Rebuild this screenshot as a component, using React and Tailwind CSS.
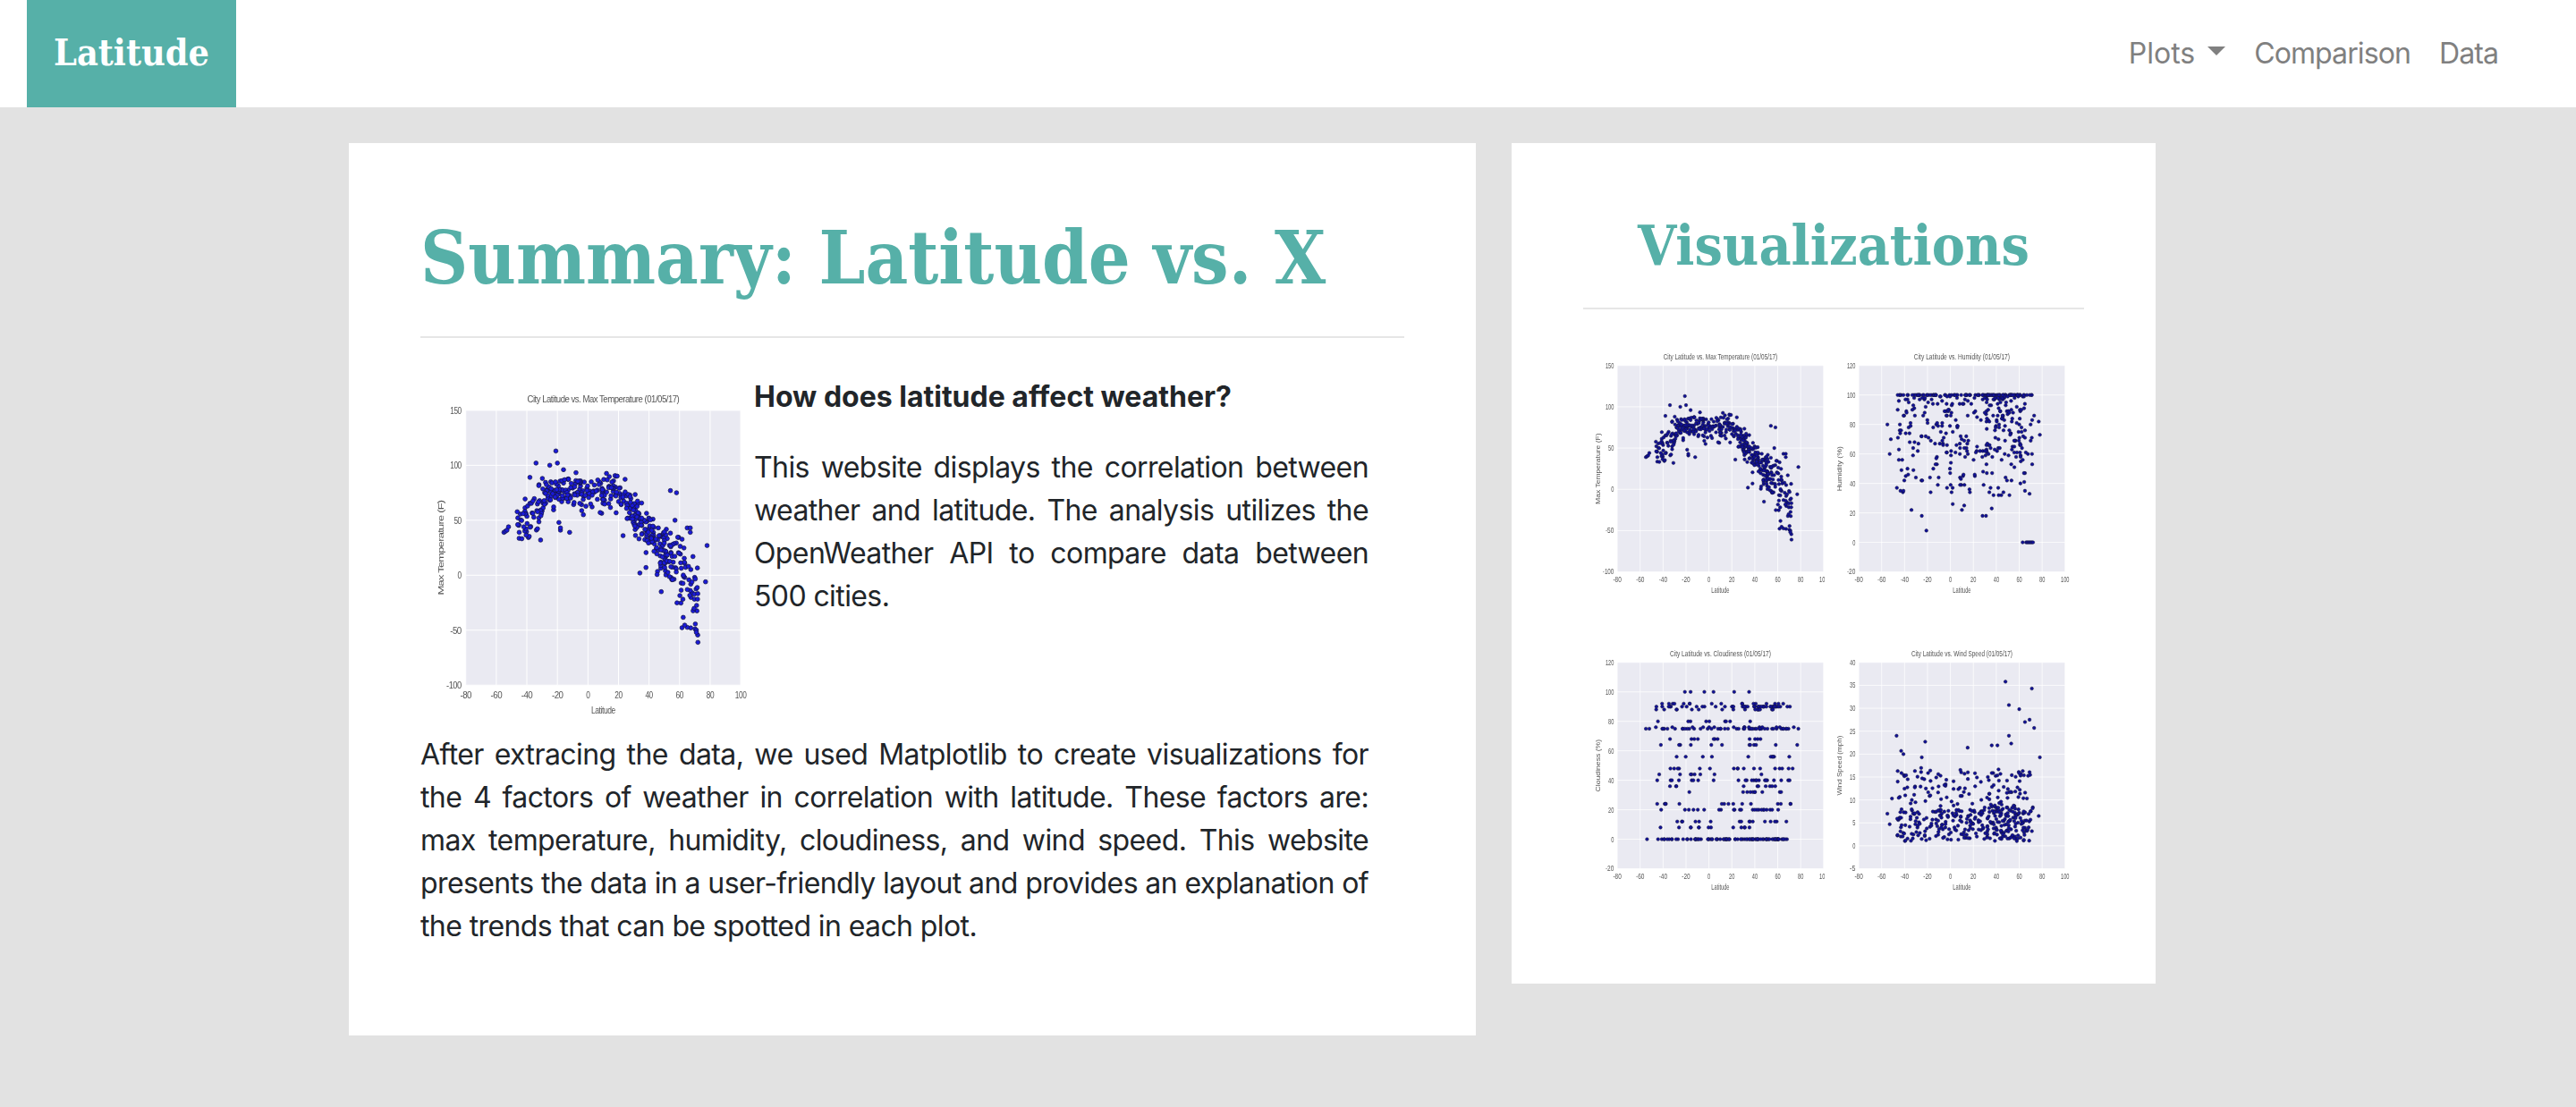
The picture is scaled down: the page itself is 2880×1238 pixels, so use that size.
import React from 'react'

// seeded random so the charts draw the same every time
function makeRandom(seed) {
  let s = seed
  return () => {
    s = (s * 1664525 + 1013904223) % 4294967296
    return s / 4294967296
  }
}

function gauss(rnd) {
  return (rnd() + rnd() + rnd() + rnd() - 2) / 0.58
}

function makeLats(count, seed) {
  const rnd = makeRandom(seed)
  const lats = []
  for (let i = 0; i < count; i++) {
    const r = rnd()
    if (r < 0.07) lats.push(-47 + rnd() * 12)
    else if (r < 0.34) lats.push(-35 + rnd() * 35)
    else if (r < 0.52) lats.push(rnd() * 28)
    else if (r < 0.95) lats.push(28 + rnd() * 37)
    else lats.push(65 + rnd() * 7)
  }
  return lats
}

function tempData() {
  const rnd = makeRandom(11)
  const pts = makeLats(470, 5).map((lat) => {
    let t
    if (lat < -30) t = 62 + (lat + 30) * 0.9 + gauss(rnd) * 9
    else if (lat < 18) t = 77 + gauss(rnd) * 7 - (rnd() < 0.12 ? 14 : 0)
    else if (lat < 45) t = 78 - (lat - 18) * 1.9 + gauss(rnd) * 9
    else if (lat < 58) t = 27 - (lat - 45) * 1.2 + gauss(rnd) * 13
    else t = 12 - (lat - 58) * 2.6 + gauss(rnd) * 20
    return [lat, t]
  })
  const extra = [[-21, 113], [-34, 102], [-25, 100], [-20, 102], [-16, 96], [-38, 89], [54, 77], [58, 75], [-55, 39], [-54, 40], [-53, 41], [-52, 44], [-46, 46], [-45, 39], [-42, 44], [-31, 32], [-12, 39], [-19, 48], [-18, 41], [-18, 43], [78, 27], [77, -6], [72, -61], [71, -50], [71, -52], [34, 2], [38, 7], [48, -15], [57, 50], [65, 43], [67, 43], [67, 39], [-3, 55], [8, 57], [23, 36]]
  return pts.concat(extra)
}

function humidityData() {
  const rnd = makeRandom(23)
  const pts = makeLats(430, 9).map((lat) => {
    const r = rnd()
    if (r < 0.25) return [lat, 100]
    if (r < 0.82) return [lat, Math.round(100 - rnd() * 42)]
    return [lat, Math.round(62 - rnd() * 30)]
  })
  const extra = [[-55, 80], [-53, 60], [-52, 70], [-46, 90], [-46, 100], [-45, 56], [-41, 35], [-39, 45], [-34, 22], [-25, 18], [-21, 8], [2, 26], [10, 22], [12, 25], [28, 18], [31, 18], [36, 23], [65, 35], [69, 33], [63, 0], [66, 0], [67, 0], [68, 0], [69, 0], [70, 0], [71, 0], [72, 0], [78, 73], [77, 82], [73, 86]]
  return pts.concat(extra)
}

function cloudData() {
  const rnd = makeRandom(37)
  const levels = [0, 0, 0, 0, 0, 0, 0, 0, 8, 12, 20, 20, 24, 32, 36, 40, 40, 44, 48, 56, 64, 68, 75, 75, 75, 75, 76, 80, 88, 90, 90, 90, 90, 92]
  const pts = makeLats(400, 14).map((lat) => [lat, levels[Math.floor(rnd() * levels.length)]])
  const extra = [[-21, 100], [-16, 100], [-4, 100], [4, 100], [22, 100], [35, 100], [-55, 75], [-52, 75], [-46, 88], [-38, 24], [78, 75], [77, 64], [-54, 0], [73, 48], [74, 76]]
  return pts.concat(extra)
}

function windData() {
  const rnd = makeRandom(51)
  const pts = makeLats(430, 21).map((lat) => {
    const r = rnd()
    const w = r < 0.62 ? 1 + rnd() * 7 : 5 + rnd() * 12
    return [lat, w]
  })
  const extra = [[48, 35.8], [71, 34.3], [51, 30.7], [60, 29.8], [69, 27.5], [65, 27], [73, 25.7], [-47, 24], [-22, 22.7], [15, 21.4], [36, 21.9], [41, 21.9], [-43, 20.7], [-41, 20], [53, 22.3], [51, 24], [78, 19.3], [77, 6.5], [-55, 7], [-53, 4.7], [-51, 10.3], [-46, 16.3], [-46, 14], [-25, 19.3]]
  return pts.concat(extra)
}

const plots = {
  temp: { title: 'City Latitude vs. Max Temperature (01/05/17)', ylabel: 'Max Temperature (F)', ymin: -100, ymax: 150, ticks: [-100, -50, 0, 50, 100, 150], data: tempData() },
  humidity: { title: 'City Latitude vs. Humidity (01/05/17)', ylabel: 'Humidity (%)', ymin: -20, ymax: 120, ticks: [-20, 0, 20, 40, 60, 80, 100, 120], data: humidityData() },
  cloud: { title: 'City Latitude vs. Cloudiness (01/05/17)', ylabel: 'Cloudiness (%)', ymin: -20, ymax: 120, ticks: [-20, 0, 20, 40, 60, 80, 100, 120], data: cloudData() },
  wind: { title: 'City Latitude vs. Wind Speed (01/05/17)', ylabel: 'Wind Speed (mph)', ymin: -5, ymax: 40, ticks: [-5, 0, 5, 10, 15, 20, 25, 30, 35, 40], data: windData() },
}

const xTicks = [-80, -60, -40, -20, 0, 20, 40, 60, 80, 100]

// plot area inside the 375x374 picture
const left = 51
const top = 22
const size = 309

function Scatter({ plot, className, dot = '#1a1ad8' }) {
  const sx = (v) => left + ((v + 80) / 180) * size
  const sy = (v) => top + size - ((v - plot.ymin) / (plot.ymax - plot.ymin)) * size
  const titleWidth = plot.title.length * 3.88
  const ylabelWidth = plot.ylabel.length * 5.6
  return (
    <svg viewBox="0 0 375 374" className={className} fontFamily="'Liberation Sans', sans-serif" fill="#555555">
      <rect x={left} y={top} width={size} height={size} fill="#eaeaf2" />
      {xTicks.map((t) => (
        <line key={t} x1={sx(t)} x2={sx(t)} y1={top} y2={top + size} stroke="#ffffff" strokeWidth="1" />
      ))}
      {plot.ticks.map((t) => (
        <line key={t} x1={left} x2={left + size} y1={sy(t)} y2={sy(t)} stroke="#ffffff" strokeWidth="1" />
      ))}
      {plot.data.map((p, i) => (
        <circle key={i} cx={sx(p[0])} cy={sy(p[1])} r="2.4" fill={dot} stroke="#14143c" strokeWidth="0.7" />
      ))}
      <text x={left + size / 2} y="13" fontSize="11.5" textAnchor="middle" textLength={titleWidth} lengthAdjust="spacingAndGlyphs">{plot.title}</text>
      {xTicks.map((t) => (
        <text key={t} x={sx(t)} y={top + size + 15} fontSize="11" textAnchor="middle" textLength={String(t).length * 4.2} lengthAdjust="spacingAndGlyphs">{t}</text>
      ))}
      {plot.ticks.map((t) => (
        <text key={t} x={left - 5} y={sy(t) + 4} fontSize="11" textAnchor="end" textLength={String(t).length * 4.2} lengthAdjust="spacingAndGlyphs">{t}</text>
      ))}
      <text x={left + size / 2} y="363" fontSize="11.5" textAnchor="middle" textLength="27" lengthAdjust="spacingAndGlyphs">Latitude</text>
      <text transform={`translate(26 ${top + size / 2}) rotate(-90)`} fontSize="10" textAnchor="middle" textLength={ylabelWidth} lengthAdjust="spacingAndGlyphs">{plot.ylabel}</text>
    </svg>
  )
}

function Navbar() {
  return (
    <nav className="flex h-[120px] items-stretch justify-between bg-white pl-[30px] pr-[71px]">
      <a className="flex w-[234px] items-center justify-center bg-[#56b0a8] text-[41px] font-bold text-white [font-family:'DejaVu_Serif_Condensed','DejaVu_Serif',serif]">Latitude</a>
      <div className="flex items-center text-[32px] tracking-[-0.9px] text-[#808080]">
        <a className="flex items-center px-4 tracking-normal">
          Plots
          <span className="ml-[14px] mt-[-6px] h-0 w-0 border-x-[10px] border-t-[10px] border-x-transparent border-t-[#808080]"></span>
        </a>
        <a className="px-4">Comparison</a>
        <a className="px-4">Data</a>
      </div>
    </nav>
  )
}

function Summary() {
  return (
    <section className="w-[1260px] bg-white px-20 pb-[98px] pt-[80px]">
      <h1 className="text-[82px] font-bold leading-[96px] text-[#56b0a8] [font-family:'DejaVu_Serif_Condensed','DejaVu_Serif',serif]">Summary: Latitude vs. X</h1>
      <hr className="mb-[42px] mt-[40px] border-t-2 border-[#e6e6e6]" />
      <div className="pr-10 text-justify text-[32px] leading-[48px] tracking-[-0.6px] text-[#212529]">
        <Scatter plot={plots.temp} className="float-left mt-[16px] h-[374px] w-[373px] blur-[0.4px]" />
        <p className="mb-[31px] font-bold tracking-normal">How does latitude affect weather?</p>
        <p>This website displays the correlation between weather and latitude. The analysis utilizes the OpenWeather API to compare data between 500 cities.</p>
        <p className="clear-both pt-[10px]">After extracing the data, we used Matplotlib to create visualizations for the 4 factors of weather in correlation with latitude. These factors are: max temperature, humidity, cloudiness, and wind speed. This website presents the data in a user-friendly layout and provides an explanation of the trends that can be spotted in each plot.</p>
      </div>
    </section>
  )
}

function Visualizations() {
  return (
    <section className="w-[720px] bg-white px-20 pb-[96px] pt-[80px]">
      <h2 className="text-center text-[62px] font-bold leading-[70px] text-[#56b0a8] [font-family:'DejaVu_Serif_Condensed','DejaVu_Serif',serif]">Visualizations</h2>
      <hr className="mb-[46px] mt-[34px] border-t-2 border-[#e6e6e6]" />
      <div className="grid grid-cols-[270px_290px] gap-y-[52px]">
        <div className="overflow-hidden"><Scatter plot={plots.temp} dot="#10109a" className="h-[280px] w-[280px] max-w-none blur-[0.7px]" /></div>
        <div><Scatter plot={plots.humidity} dot="#10109a" className="h-[280px] w-[280px] blur-[0.7px]" /></div>
        <div className="overflow-hidden"><Scatter plot={plots.cloud} dot="#10109a" className="h-[280px] w-[280px] max-w-none blur-[0.7px]" /></div>
        <div><Scatter plot={plots.wind} dot="#10109a" className="h-[280px] w-[280px] blur-[0.7px]" /></div>
      </div>
    </section>
  )
}

export default function App() {
  return (
    <div className="min-h-screen bg-[#e2e2e2] [font-family:Inter,sans-serif]">
      <Navbar />
      <main className="flex items-start gap-10 pl-[390px] pt-10">
        <Summary />
        <Visualizations />
      </main>
    </div>
  )
}
